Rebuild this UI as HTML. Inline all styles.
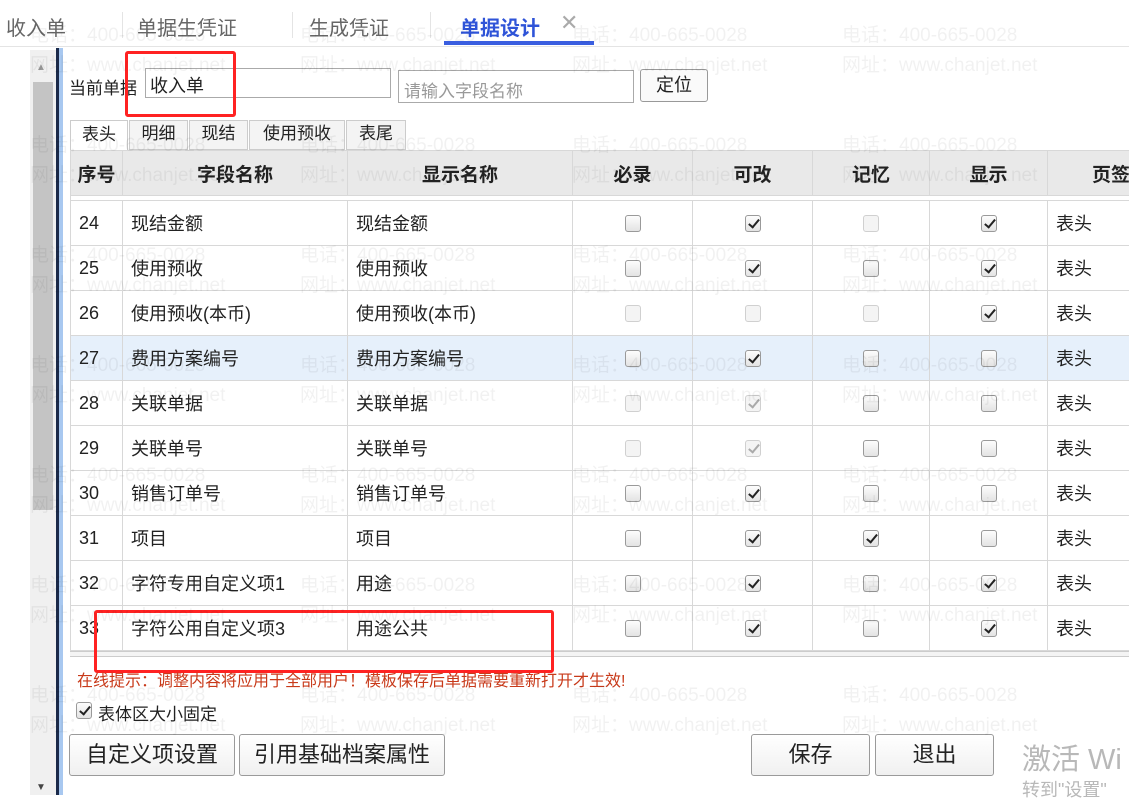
<!DOCTYPE html>
<html><head><meta charset="utf-8"><style>
*{box-sizing:border-box;margin:0;padding:0}
body{width:1129px;height:795px;overflow:hidden;background:#fff;font-family:"Liberation Sans","Noto Sans CJK SC",sans-serif;position:relative;color:#222}
.a{position:absolute}
.tab{position:absolute;top:12px;font-size:20px;color:#666}
.sep{position:absolute;top:12px;width:1px;height:26px;background:#e4e4e4}
table{border-collapse:collapse;position:absolute;left:70px;top:150px;table-layout:fixed;width:1077px}
td,th{border:1px solid #d8d8d8;height:45px;font-size:18px;padding-left:8px;text-align:left;font-weight:normal}
th{background:#e9e9e9;font-weight:bold;text-align:center;padding:0;font-size:19px}
td.c{text-align:center;padding:0}
.cb{display:inline-block;width:16px;height:17px;border:1px solid #9a9a9a;border-radius:3px;background:linear-gradient(#fdfdfd,#e3e3e3);vertical-align:middle;position:relative}
.cb.d{border-color:#d0d0d0;background:#f4f4f4}
.cb.k::after{content:"";position:absolute;left:5px;top:1px;width:4px;height:9px;border:solid #222;border-width:0 2.5px 2.5px 0;transform:rotate(40deg)}
.cb.d.k::after{border-color:#aaa}
.btn{position:absolute;border:1px solid #9a9a9a;border-radius:3px;background:linear-gradient(#fff,#f0f0f0);font-size:22px;text-align:center;line-height:40px;height:42px}
.wm{position:absolute;font-size:19px;color:rgba(0,0,0,0.055);white-space:nowrap;pointer-events:none}
</style></head><body>
<div class="tab" style="left:6px">收入单</div>
<div class="sep" style="left:122px"></div>
<div class="tab" style="left:137px">单据生凭证</div>
<div class="sep" style="left:292px"></div>
<div class="tab" style="left:309px">生成凭证</div>
<div class="sep" style="left:430px"></div>
<div class="tab" style="left:460px;color:#2f54d8;font-weight:bold">单据设计</div>
<div class="tab" style="left:560px;color:#aaa;font-size:22px;top:10px">✕</div>
<div class="a" style="left:444px;top:41px;width:150px;height:4px;background:#3a5ee0"></div>
<div class="a" style="left:0;top:46px;width:1129px;height:1px;background:#e4e4e4"></div>

<div class="a" style="left:30px;top:50px;width:26px;height:745px;background:#f0f0f0"></div>
<div class="a" style="left:33px;top:82px;width:20px;height:428px;background:#c4c4c4"></div>
<div class="a" style="left:36px;top:62px;font-size:10px;color:#999">▲</div>
<div class="a" style="left:36px;top:782px;font-size:10px;color:#444">▼</div>
<div class="a" style="left:56px;top:48px;width:3px;height:747px;background:#1b2a4a"></div>
<div class="a" style="left:59px;top:48px;width:4px;height:747px;background:#a8c8f0"></div>

<div class="a" style="left:69px;top:74px;font-size:17px">当前单据</div>
<div class="a" style="left:145px;top:68px;width:246px;height:30px;border:1px solid #aaa;font-size:18px;padding:3px 4px">收入单</div>
<div class="a" style="left:398px;top:70px;width:236px;height:33px;border:1px solid #aaa;font-size:17px;color:#999;padding:6px 5px">请输入字段名称</div>
<div class="a" style="left:640px;top:69px;width:68px;height:33px;border:1px solid #999;border-radius:3px;background:#fafafa;font-size:18px;text-align:center;line-height:31px">定位</div>
<div class="a" style="left:125px;top:51px;width:111px;height:66px;border:3px solid #f22;border-radius:3px"></div>

<div class="a" style="left:70px;top:120px;width:58px;height:31px;border:1px solid #ccc;border-bottom:none;background:#fff;font-size:17px;text-align:center;line-height:28px">表头</div>
<div class="a" style="left:129px;top:120px;width:59px;height:30px;border:1px solid #ccc;background:#f4f4f4;font-size:17px;text-align:center;line-height:26px">明细</div>
<div class="a" style="left:189px;top:120px;width:59px;height:30px;border:1px solid #ccc;background:#f4f4f4;font-size:17px;text-align:center;line-height:26px">现结</div>
<div class="a" style="left:249px;top:120px;width:96px;height:30px;border:1px solid #ccc;background:#f4f4f4;font-size:17px;text-align:center;line-height:26px">使用预收</div>
<div class="a" style="left:346px;top:120px;width:60px;height:30px;border:1px solid #ccc;background:#f4f4f4;font-size:17px;text-align:center;line-height:26px">表尾</div>

<table>
<colgroup><col style="width:52px"><col style="width:225px"><col style="width:225px"><col style="width:120px"><col style="width:120px"><col style="width:117px"><col style="width:118px"><col style="width:100px"></colgroup>
<tr><th>序号</th><th>字段名称</th><th>显示名称</th><th>必录</th><th>可改</th><th>记忆</th><th>显示</th><th style="text-align:left;padding-left:44px">页签</th></tr>
<tr><td colspan="8" style="height:5px;padding:0;background:#fff"></td></tr>
<tr><td>24</td><td>现结金额</td><td>现结金额</td><td class="c"><span class="cb"></span></td><td class="c"><span class="cb k"></span></td><td class="c"><span class="cb d"></span></td><td class="c"><span class="cb k"></span></td><td>表头</td></tr>
<tr><td>25</td><td>使用预收</td><td>使用预收</td><td class="c"><span class="cb"></span></td><td class="c"><span class="cb k"></span></td><td class="c"><span class="cb"></span></td><td class="c"><span class="cb k"></span></td><td>表头</td></tr>
<tr><td>26</td><td>使用预收(本币)</td><td>使用预收(本币)</td><td class="c"><span class="cb d"></span></td><td class="c"><span class="cb d"></span></td><td class="c"><span class="cb d"></span></td><td class="c"><span class="cb k"></span></td><td>表头</td></tr>
<tr style="background:#e6f0fb"><td>27</td><td>费用方案编号</td><td>费用方案编号</td><td class="c"><span class="cb"></span></td><td class="c"><span class="cb k"></span></td><td class="c"><span class="cb"></span></td><td class="c"><span class="cb"></span></td><td>表头</td></tr>
<tr><td>28</td><td>关联单据</td><td>关联单据</td><td class="c"><span class="cb d"></span></td><td class="c"><span class="cb d k"></span></td><td class="c"><span class="cb"></span></td><td class="c"><span class="cb"></span></td><td>表头</td></tr>
<tr><td>29</td><td>关联单号</td><td>关联单号</td><td class="c"><span class="cb d"></span></td><td class="c"><span class="cb d k"></span></td><td class="c"><span class="cb"></span></td><td class="c"><span class="cb"></span></td><td>表头</td></tr>
<tr><td>30</td><td>销售订单号</td><td>销售订单号</td><td class="c"><span class="cb"></span></td><td class="c"><span class="cb k"></span></td><td class="c"><span class="cb"></span></td><td class="c"><span class="cb"></span></td><td>表头</td></tr>
<tr><td>31</td><td>项目</td><td>项目</td><td class="c"><span class="cb"></span></td><td class="c"><span class="cb k"></span></td><td class="c"><span class="cb k"></span></td><td class="c"><span class="cb"></span></td><td>表头</td></tr>
<tr><td>32</td><td>字符专用自定义项1</td><td>用途</td><td class="c"><span class="cb"></span></td><td class="c"><span class="cb k"></span></td><td class="c"><span class="cb"></span></td><td class="c"><span class="cb k"></span></td><td>表头</td></tr>
<tr><td>33</td><td>字符公用自定义项3</td><td>用途公共</td><td class="c"><span class="cb"></span></td><td class="c"><span class="cb k"></span></td><td class="c"><span class="cb"></span></td><td class="c"><span class="cb k"></span></td><td>表头</td></tr>
</table>
<div class="a" style="left:70px;top:651px;width:1059px;height:6px;border-top:1px solid #ccc;border-bottom:1px solid #ccc;background:#f4f4f4"></div>
<div class="a" style="left:94px;top:610px;width:460px;height:63px;border:3px solid #f22;border-radius:3px"></div>

<div class="a" style="left:77px;top:667px;font-size:16px;color:#c83a1a">在线提示：调整内容将应用于全部用户！模板保存后单据需要重新打开才生效!</div>
<div class="a" style="left:76px;top:702px"><span class="cb k"></span></div>
<div class="a" style="left:98px;top:700px;font-size:17px">表体区大小固定</div>

<div class="btn" style="left:69px;top:734px;width:166px">自定义项设置</div>
<div class="btn" style="left:239px;top:734px;width:206px">引用基础档案属性</div>
<div class="btn" style="left:751px;top:734px;width:119px">保存</div>
<div class="btn" style="left:875px;top:734px;width:119px">退出</div>
<div class="a" style="left:1022px;top:736px;font-size:29px;color:#b8b8b8;white-space:nowrap">激活 Wi</div>
<div class="a" style="left:1022px;top:776px;font-size:18px;color:#b8b8b8;white-space:nowrap">转到"设置"</div>

<div class="wm" style="left:30px;top:20px">电话：400-665-0028</div><div class="wm" style="left:300px;top:20px">电话：400-665-0028</div><div class="wm" style="left:572px;top:20px">电话：400-665-0028</div><div class="wm" style="left:842px;top:20px">电话：400-665-0028</div>
<div class="wm" style="left:30px;top:50px">网址：www.chanjet.net</div><div class="wm" style="left:300px;top:50px">网址：www.chanjet.net</div><div class="wm" style="left:572px;top:50px">网址：www.chanjet.net</div><div class="wm" style="left:842px;top:50px">网址：www.chanjet.net</div>
<div class="wm" style="left:30px;top:130px">电话：400-665-0028</div><div class="wm" style="left:300px;top:130px">电话：400-665-0028</div><div class="wm" style="left:572px;top:130px">电话：400-665-0028</div><div class="wm" style="left:842px;top:130px">电话：400-665-0028</div>
<div class="wm" style="left:30px;top:160px">网址：www.chanjet.net</div><div class="wm" style="left:300px;top:160px">网址：www.chanjet.net</div><div class="wm" style="left:572px;top:160px">网址：www.chanjet.net</div><div class="wm" style="left:842px;top:160px">网址：www.chanjet.net</div>
<div class="wm" style="left:30px;top:240px">电话：400-665-0028</div><div class="wm" style="left:300px;top:240px">电话：400-665-0028</div><div class="wm" style="left:572px;top:240px">电话：400-665-0028</div><div class="wm" style="left:842px;top:240px">电话：400-665-0028</div>
<div class="wm" style="left:30px;top:270px">网址：www.chanjet.net</div><div class="wm" style="left:300px;top:270px">网址：www.chanjet.net</div><div class="wm" style="left:572px;top:270px">网址：www.chanjet.net</div><div class="wm" style="left:842px;top:270px">网址：www.chanjet.net</div>
<div class="wm" style="left:30px;top:350px">电话：400-665-0028</div><div class="wm" style="left:300px;top:350px">电话：400-665-0028</div><div class="wm" style="left:572px;top:350px">电话：400-665-0028</div><div class="wm" style="left:842px;top:350px">电话：400-665-0028</div>
<div class="wm" style="left:30px;top:380px">网址：www.chanjet.net</div><div class="wm" style="left:300px;top:380px">网址：www.chanjet.net</div><div class="wm" style="left:572px;top:380px">网址：www.chanjet.net</div><div class="wm" style="left:842px;top:380px">网址：www.chanjet.net</div>
<div class="wm" style="left:30px;top:460px">电话：400-665-0028</div><div class="wm" style="left:300px;top:460px">电话：400-665-0028</div><div class="wm" style="left:572px;top:460px">电话：400-665-0028</div><div class="wm" style="left:842px;top:460px">电话：400-665-0028</div>
<div class="wm" style="left:30px;top:490px">网址：www.chanjet.net</div><div class="wm" style="left:300px;top:490px">网址：www.chanjet.net</div><div class="wm" style="left:572px;top:490px">网址：www.chanjet.net</div><div class="wm" style="left:842px;top:490px">网址：www.chanjet.net</div>
<div class="wm" style="left:30px;top:570px">电话：400-665-0028</div><div class="wm" style="left:300px;top:570px">电话：400-665-0028</div><div class="wm" style="left:572px;top:570px">电话：400-665-0028</div><div class="wm" style="left:842px;top:570px">电话：400-665-0028</div>
<div class="wm" style="left:30px;top:600px">网址：www.chanjet.net</div><div class="wm" style="left:300px;top:600px">网址：www.chanjet.net</div><div class="wm" style="left:572px;top:600px">网址：www.chanjet.net</div><div class="wm" style="left:842px;top:600px">网址：www.chanjet.net</div>
<div class="wm" style="left:30px;top:680px">电话：400-665-0028</div><div class="wm" style="left:300px;top:680px">电话：400-665-0028</div><div class="wm" style="left:572px;top:680px">电话：400-665-0028</div><div class="wm" style="left:842px;top:680px">电话：400-665-0028</div>
<div class="wm" style="left:30px;top:710px">网址：www.chanjet.net</div><div class="wm" style="left:300px;top:710px">网址：www.chanjet.net</div><div class="wm" style="left:572px;top:710px">网址：www.chanjet.net</div><div class="wm" style="left:842px;top:710px">网址：www.chanjet.net</div>
</body></html>
